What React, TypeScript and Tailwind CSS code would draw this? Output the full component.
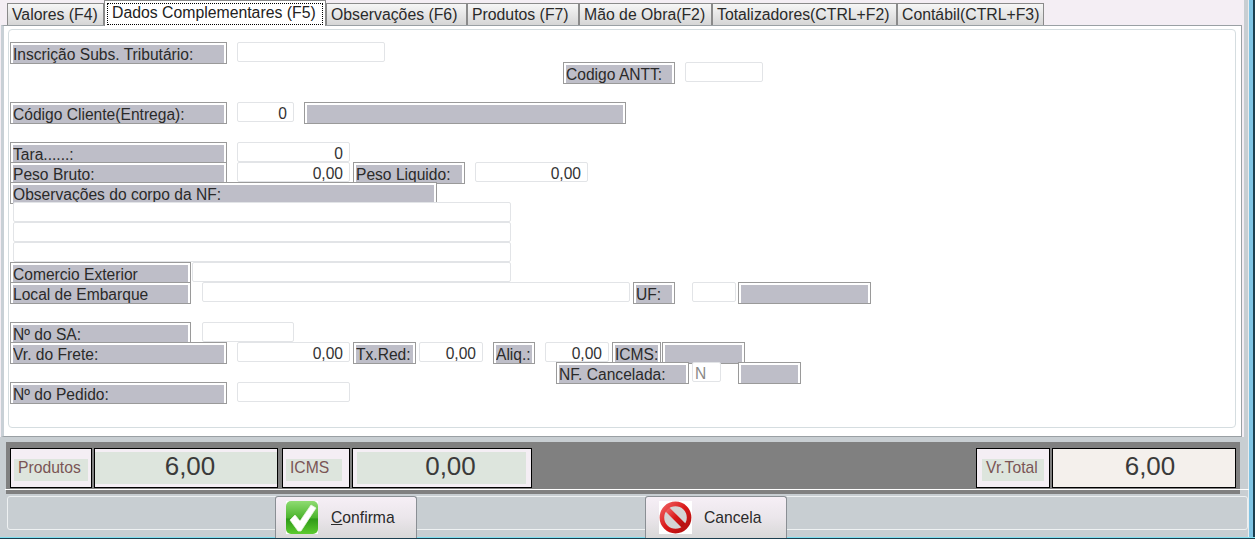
import React from "react";

type BoxProps = {
  className: string;
  children?: React.ReactNode;
};

function Label({ className, children }: BoxProps) {
  return (
    <div
      className={`h-[22px] shrink-0 border border-[#9a9a9a] bg-white px-[2px] pt-[2px] pb-0 ${className}`}
    >
      <div className="h-[18px] bg-[#bebec8] text-[15.6px] leading-[20px] text-[#2a2a2a] whitespace-nowrap overflow-hidden">
        {children}
      </div>
    </div>
  );
}

function Field({
  className,
  value,
  left,
}: {
  className: string;
  value?: string;
  left?: boolean;
}) {
  return (
    <div
      className={`h-5 shrink-0 rounded-[2px] border border-[#e2e4e7] bg-white text-[15.6px] leading-[21px] text-[#333] ${
        left ? "pl-[2px] text-left" : "pr-[6px] text-right"
      } ${className}`}
    >
      {value}
    </div>
  );
}

function Row({ children }: { children?: React.ReactNode }) {
  return <div className="flex h-5 items-start">{children}</div>;
}

function Tab({
  width,
  children,
  active,
}: {
  width: string;
  children: React.ReactNode;
  active?: boolean;
}) {
  if (active) {
    return (
      <div
        className={`relative z-10 -mb-px h-[26px] shrink-0 border border-b-0 border-[#8a8a8a] bg-white p-[2px] text-[15.8px] leading-[17px] text-[#222] ${width}`}
      >
        <div className="h-[22px] border border-dotted border-black pl-[4px] whitespace-nowrap">
          {children}
        </div>
      </div>
    );
  }
  return (
    <div
      className={`mt-[3px] h-[22px] shrink-0 border border-b-0 border-[#8a8a8a] bg-gradient-to-b from-[#f6f6f6] to-[#d6d6d6] pl-[4px] pt-[2px] text-[15.8px] leading-[18px] text-[#2a2a2a] whitespace-nowrap ${width}`}
    >
      {children}
    </div>
  );
}

function TotalLabel({
  outer,
  inner,
  children,
}: {
  outer: string;
  inner: string;
  children: React.ReactNode;
}) {
  return (
    <div
      className={`flex h-10 shrink-0 items-center border border-black bg-[#f4eef4] pt-[3px] ${outer}`}
    >
      <div
        className={`h-[22px] bg-[#dde5dd] text-[15.7px] leading-[18px] text-[#7a5555] ${inner}`}
      >
        {children}
      </div>
    </div>
  );
}

function TotalValue({
  outer,
  inner,
  value,
}: {
  outer: string;
  inner: string;
  value: string;
}) {
  return (
    <div
      className={`h-10 shrink-0 border border-black py-[3px] text-center text-[26px] leading-[28px] text-[#3a3a3a] ${outer}`}
    >
      <div className={`h-8 ${inner}`}>{value}</div>
    </div>
  );
}

function CheckIcon() {
  return (
    <svg width="32" height="33" viewBox="0 0 32 33" className="shrink-0">
      <defs>
        <linearGradient id="greenFill" x1="0" y1="0" x2="0" y2="1">
          <stop offset="0" stopColor="#8fdc72" />
          <stop offset="0.5" stopColor="#4db52e" />
          <stop offset="0.55" stopColor="#2f9a18" />
          <stop offset="1" stopColor="#5ccb30" />
        </linearGradient>
      </defs>
      <rect width="32" height="33" fill="#fff" />
      <rect width="32" height="33" rx="5" fill="url(#greenFill)" />
      <path
        d="M4 19 L9 14 L14 20 L25 4 L30 7 L15 30 L12 30 Z"
        fill="#fff"
        stroke="#e8f5e0"
        strokeWidth="0.8"
        strokeLinejoin="round"
      />
    </svg>
  );
}

function CancelIcon() {
  return (
    <svg width="33" height="33" viewBox="0 0 33 33" className="shrink-0">
      <defs>
        <linearGradient id="redFill" x1="0" y1="0" x2="1" y2="1">
          <stop offset="0" stopColor="#f06060" />
          <stop offset="0.5" stopColor="#d81818" />
          <stop offset="1" stopColor="#b01010" />
        </linearGradient>
      </defs>
      <rect width="33" height="33" fill="#fff" />
      <circle cx="16.5" cy="16.5" r="12" fill="#d4d4d4" />
      <path d="M8 8 L25 25" stroke="url(#redFill)" strokeWidth="5.5" />
      <circle
        cx="16.5"
        cy="16.5"
        r="13.6"
        fill="none"
        stroke="url(#redFill)"
        strokeWidth="4.6"
      />
    </svg>
  );
}

function ActionButton({
  icon,
  pad,
  children,
}: {
  icon: React.ReactNode;
  pad: string;
  children: React.ReactNode;
}) {
  return (
    <button
      className={`relative -mt-px flex h-[42px] w-[142px] shrink-0 items-center rounded-t-[3px] border border-b-0 border-[#8a8f94] bg-gradient-to-b from-[#f6eff6] via-[#ebe6eb] to-[#d8d8d8] text-[15.7px] text-[#2a2a2a] ${pad}`}
    >
      {icon}
      {children}
    </button>
  );
}

export default function App() {
  return (
    <div className="flex h-[539px] w-[1255px] flex-col overflow-hidden bg-[#c8ced2] font-['Liberation_Sans',Arial,sans-serif]">
      <div className="flex h-[537px]">
        <div className="w-[1249px] shrink-0 border-r border-[#e8ecee]">
          {/* abas + folha */}
          <div className="h-[437px] w-[1244px] bg-[#f4eef4]">
            <div className="flex h-[25px] pl-[7px]">
              <Tab width="w-[97px]">Valores (F4)</Tab>
              <Tab width="w-[222px]" active>
                Dados Complementares (F5)
              </Tab>
              <Tab width="w-[141px]">Observações (F6)</Tab>
              <Tab width="w-[112px]">Produtos (F7)</Tab>
              <Tab width="w-[133px]">Mão de Obra(F2)</Tab>
              <Tab width="w-[185px]">Totalizadores(CTRL+F2)</Tab>
              <Tab width="w-[147px]">Contábil(CTRL+F3)</Tab>
            </div>
            <div className="ml-px h-[412px] w-[1241px] border border-l-[3px] border-[#9aa0a4] border-l-[#c8d0d6] bg-white pt-[3px] pl-[4px] pr-[5px]">
              <div className="h-[399px] rounded-[4px] border border-[#d5dde0] bg-white pt-3 pl-[1px]">
                <Row>
                  <Label className="w-[217px]">Inscrição Subs. Tributário:</Label>
                  <Field className="ml-[10px] w-[148px]" />
                </Row>
                <Row>
                  <Label className="ml-[553px] w-[112px]">Codigo ANTT:</Label>
                  <Field className="ml-[10px] w-[78px]" />
                </Row>
                <Row />
                <Row>
                  <Label className="w-[217px]">Código Cliente(Entrega):</Label>
                  <Field className="ml-[10px] w-[57px]" value="0" />
                  <Label className="ml-[10px] w-[322px]" />
                </Row>
                <Row />
                <Row>
                  <Label className="w-[217px]">Tara......:</Label>
                  <Field className="ml-[10px] w-[113px]" value="0" />
                </Row>
                <Row>
                  <Label className="w-[217px]">Peso Bruto:</Label>
                  <Field className="ml-[10px] w-[113px]" value="0,00" />
                  <Label className="ml-[3px] w-[112px]">Peso Liquido:</Label>
                  <Field className="ml-[10px] w-[113px]" value="0,00" />
                </Row>
                <Row>
                  <Label className="w-[427px]">Observações do corpo da NF:</Label>
                </Row>
                <Row>
                  <Field className="ml-[3px] w-[498px]" />
                </Row>
                <Row>
                  <Field className="ml-[3px] w-[498px]" />
                </Row>
                <Row>
                  <Field className="ml-[3px] w-[498px]" />
                </Row>
                <Row>
                  <Label className="w-[181px]">Comercio Exterior</Label>
                  <Field className="ml-px w-[319px]" />
                </Row>
                <Row>
                  <Label className="w-[181px]">Local de Embarque</Label>
                  <Field className="ml-[11px] w-[428px]" />
                  <Label className="ml-[3px] w-[42px]">UF:</Label>
                  <Field className="ml-[17px] w-[44px]" />
                  <Label className="ml-[2px] w-[133px]" />
                </Row>
                <Row />
                <Row>
                  <Label className="w-[181px]">Nº do SA:</Label>
                  <Field className="ml-[11px] w-[92px]" />
                </Row>
                <Row>
                  <Label className="w-[217px]">Vr. do Frete:</Label>
                  <Field className="ml-[10px] w-[113px]" value="0,00" />
                  <Label className="ml-[3px] w-[63px]">Tx.Red:</Label>
                  <Field className="ml-[3px] w-[64px]" value="0,00" />
                  <Label className="ml-[10px] w-[42px]">Aliq.:</Label>
                  <Field className="ml-[10px] w-[64px]" value="0,00" />
                  <Label className="ml-[3px] w-[49px]">ICMS:</Label>
                  <Label className="ml-px w-[83px]" />
                </Row>
                <Row>
                  <Label className="ml-[546px] w-[133px]">NF. Cancelada:</Label>
                  <Field className="ml-[3px] w-[29px] text-[#888]" value="N" left />
                  <Label className="ml-[17px] w-[63px]" />
                </Row>
                <Row>
                  <Label className="w-[217px]">Nº do Pedido:</Label>
                  <Field className="ml-[10px] w-[113px]" />
                </Row>
              </div>
            </div>
          </div>

          {/* totais */}
          <div className="ml-[6px] mt-[5px] h-[52px] w-[1234px] bg-[#808080]">
            <div className="mr-[-10px] -ml-px flex h-[48px] border-b border-white pt-[6px] pl-[5px]">
              <TotalLabel outer="w-[82px] pl-[3px]" inner="w-[74px] pl-[4px]">
                Produtos
              </TotalLabel>
              <TotalValue
                outer="ml-[2px] w-[184px] bg-[#f4eef4]"
                inner="bg-[#dde5dd] pl-[8px]"
                value="6,00"
              />
              <TotalLabel outer="ml-[4px] w-[68px] pl-[3px]" inner="w-[56px] pl-[4px]">
                ICMS
              </TotalLabel>
              <TotalValue
                outer="ml-[2px] w-[180px] bg-[#f4eef4] px-[4px]"
                inner="mr-[1px] bg-[#dde5dd] pl-[18px]"
                value="0,00"
              />
              <TotalLabel outer="ml-[444px] w-[74px] pl-[5px]" inner="w-[62px] pl-[4px]">
                Vr.Total
              </TotalLabel>
              <TotalValue
                outer="ml-[2px] w-[184px] bg-[#f4f0ec]"
                inner="pl-[12px]"
                value="6,00"
              />
            </div>
          </div>

          {/* botoes */}
          <div className="ml-[7px] mt-[2px] flex h-[34px] w-[1241px] rounded-[3px] border border-[#eef1f2] pl-[267px]">
            <ActionButton icon={<CheckIcon />} pad="pl-[10px] gap-[13px]">
              <span>
                <span className="underline">C</span>onfirma
              </span>
            </ActionButton>
            <ActionButton icon={<CancelIcon />} pad="ml-[228px] pl-[13px] gap-[12px]">
              Cancela
            </ActionButton>
          </div>
        </div>
        <div className="w-1 shrink-0 bg-[#7fc4e4]" />
        <div className="w-[2px] shrink-0 bg-[#1c3f50]" />
      </div>
      <div className="h-[2px] border-t border-[#7fe0f0] bg-[#1c3f50]" />
    </div>
  );
}
